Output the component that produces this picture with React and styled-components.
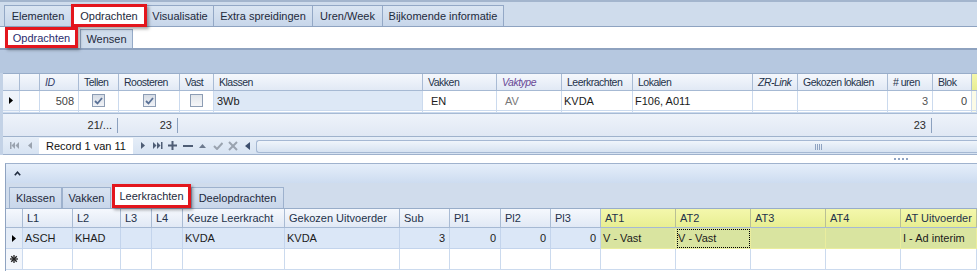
import React from 'react';
import styled, { createGlobalStyle, css } from 'styled-components';

const GlobalStyle = createGlobalStyle`
  html, body { margin: 0; padding: 0; background: #fff; }
  body {
    font-family: "Liberation Sans", Arial, sans-serif;
    font-size: 11px;
    color: #1b1b1b;
  }
`;

const MAIN_COLS = '17px 20px 39px 40px 61px 34px 209px 74px 65px 71px 120px 45px 90px 45px 39px 1fr';
const DETAIL_COLS = '17px 50px 48px 31px 31px 102px 115px 50px 51px 50px 50px 75px 75px 75px 75px 1fr';

const mainTabs = [
  { label: 'Elementen', w: 68 },
  { label: 'Opdrachten', w: 76, active: true },
  { label: 'Visualisatie', w: 68 },
  { label: 'Extra spreidingen', w: 100 },
  { label: 'Uren/Week', w: 71 },
  { label: 'Bijkomende informatie', w: 122 },
];

const mainColumns = [
  { label: '' },
  { label: '' },
  { label: 'ID', italic: true, color: '#34406a' },
  { label: 'Tellen' },
  { label: 'Roosteren' },
  { label: 'Vast' },
  { label: 'Klassen' },
  { label: 'Vakken' },
  { label: 'Vaktype', italic: true, color: '#6a4a96' },
  { label: 'Leerkrachten' },
  { label: 'Lokalen' },
  { label: 'ZR-Link', italic: true },
  { label: 'Gekozen lokalen' },
  { label: '# uren' },
  { label: 'Blok' },
  { label: '', yellow: true },
];

const detailColumns = [
  '', 'L1', 'L2', 'L3', 'L4', 'Keuze Leerkracht', 'Gekozen Uitvoerder', 'Sub',
  'Pl1', 'Pl2', 'Pl3', 'AT1', 'AT2', 'AT3', 'AT4', 'AT Uitvoerder',
];

const detailRow = [
  { text: 'ASCH' }, { text: 'KHAD' }, { text: '' }, { text: '' },
  { text: 'KVDA' }, { text: 'KVDA' },
  { text: '3', right: true }, { text: '0', right: true }, { text: '0', right: true }, { text: '0', right: true },
  { text: 'V - Vast', at: true }, { text: 'V - Vast', at: true, focus: true },
  { text: '', at: true }, { text: '', at: true }, { text: 'I - Ad interim', at: true },
];

const marked = css`
  border: 3px solid #e3161d;
  box-shadow: 2px 2px 3px rgba(0, 0, 0, 0.35);
  position: relative;
  z-index: 1;
`;

const Page = styled.div`
  width: 977px;
  height: 271px;
  overflow: hidden;
  background: #fff;
  display: flex;
  flex-direction: column;
`;

const TabStrip = styled.div`
  box-sizing: border-box;
  height: 27px;
  display: flex;
  align-items: flex-end;
  padding-left: 4px;
  background: #cfdcec;
  border-top: 2px solid #a3b5cd;
  border-bottom: 1px solid #8ea3c1;
  flex-shrink: 0;
`;

const Tab = styled.div`
  box-sizing: border-box;
  width: ${(p) => p.$w}px;
  height: ${(p) => (p.$active ? 23 : 21)}px;
  margin-bottom: ${(p) => (p.$active ? -1 : 0)}px;
  margin-left: -1px;
  display: flex;
  align-items: center;
  justify-content: center;
  color: #1e2a3c;
  white-space: nowrap;
  background: ${(p) => (p.$active ? '#fff' : 'linear-gradient(#dae5f2, #c7d6ea)')};
  border: 1px solid #93a8c6;
  border-bottom: none;
  &:first-child { margin-left: 0; }
  ${(p) => p.$marked && marked}
`;

const SubStrip = styled.div`
  box-sizing: border-box;
  height: 23px;
  display: flex;
  align-items: flex-end;
  padding-left: 5px;
  background: #fff;
  border-bottom: 2px solid #8ea2bf;
  flex-shrink: 0;
`;

const SubTab = styled.div`
  box-sizing: border-box;
  width: ${(p) => p.$w}px;
  height: ${(p) => (p.$active ? 21 : 19)}px;
  margin-left: ${(p) => (p.$active ? 0 : 2)}px;
  display: flex;
  align-items: center;
  justify-content: center;
  color: ${(p) => (p.$active ? '#2b2d6e' : '#1e2a3c')};
  background: ${(p) => (p.$active ? '#fff' : '#cfdcec')};
  border: 1px solid #95aac7;
  border-bottom: none;
  ${(p) => p.$marked && marked}
`;

const GroupPanel = styled.div`
  height: 23px;
  background: #b6c8e0;
  flex-shrink: 0;
`;

const MainGrid = styled.div`
  border-left: 3px solid #c3d2e6;
  flex-shrink: 0;
`;

const Row = styled.div`
  box-sizing: border-box;
  display: grid;
  grid-template-columns: ${(p) => p.$cols};
  height: ${(p) => p.$h}px;
`;

const HeaderRow = styled(Row)`
  border-top: 1px solid #98adc9;
  border-bottom: 1px solid #a6b9d3;
`;

const HeadCell = styled.div`
  box-sizing: border-box;
  display: flex;
  align-items: center;
  padding: 0 4px;
  overflow: hidden;
  white-space: nowrap;
  border-right: 1px solid ${(p) => (p.$yellow ? '#b9bf95' : '#a9bbd4')};
  background: ${(p) => (p.$yellow ? 'linear-gradient(#f4f7ac, #e8ee92)' : 'linear-gradient(#f5f8fd, #e1e9f5)')};
  color: ${(p) => p.$color || '#24324a'};
  font-style: ${(p) => (p.$italic ? 'italic' : 'normal')};
  ${(p) => p.$narrow && css`
    font-size: 10.5px;
    letter-spacing: -0.5px;
    padding-left: 5px;
  `}
`;

const Cell = styled.div`
  box-sizing: border-box;
  display: flex;
  align-items: center;
  justify-content: ${(p) => (p.$right ? 'flex-end' : p.$center ? 'center' : 'flex-start')};
  padding: 0 ${(p) => (p.$right ? 4 : 0)}px 0 ${(p) => (p.$indent ?? 3)}px;
  overflow: hidden;
  white-space: nowrap;
  color: ${(p) => p.$color || '#1b1b1b'};
  background: ${(p) => p.$bg || '#fff'};
  border-right: 1px solid ${(p) => p.$line || '#cbdaee'};
  border-bottom: 1px solid ${(p) => p.$line || '#cbdaee'};
  ${(p) => p.$focus && css`outline: 1px dotted #000; outline-offset: -2px;`}
`;

const Check = styled.div`
  box-sizing: border-box;
  width: 13px;
  height: 13px;
  border: 1px solid #8d9db4;
  background: ${(p) => (p.$on ? 'linear-gradient(#d6dce5, #f1f3f7)' : 'linear-gradient(#e1e5ea, #f5f6f8)')};
  display: flex;
  align-items: center;
  justify-content: center;
`;

const FooterRow = styled(Row)`
  background: linear-gradient(#eef3fa, #e0e8f4);
  border-top: 1px solid #a7bad4;
  border-bottom: 1px solid #9fb2cc;
`;

const Summary = styled.div`
  box-sizing: border-box;
  align-self: center;
  height: 15px;
  display: flex;
  align-items: center;
  justify-content: flex-end;
  padding-right: 5px;
  color: #2b2b2b;
  border-right: ${(p) => (p.$text ? '1px solid #8ca1bf' : 'none')};
  margin-right: ${(p) => (p.$gap ?? 1)}px;
`;

const NavRow = styled.div`
  box-sizing: border-box;
  height: 18px;
  display: flex;
  align-items: stretch;
  padding-left: 4px;
  background: linear-gradient(#e6eef8, #d7e3f2);
  border-bottom: 1px solid #9eb1cc;
`;

const NavButton = styled.div`
  width: 15px;
  flex-shrink: 0;
  display: flex;
  align-items: center;
  justify-content: center;
`;

const RecordBox = styled.div`
  width: 94px;
  margin: 1px 2px 0;
  background: #fff;
  display: flex;
  align-items: center;
  padding-left: 7px;
  box-sizing: border-box;
  color: #111;
`;

const ScrollThumb = styled.div`
  flex: 1;
  margin: 3px 0 1px 1px;
  border: 1px solid #a5b8d3;
  border-right: none;
  border-radius: 3px 0 0 3px;
  background: linear-gradient(#f0f5fb, #d6e2f1);
  display: flex;
  align-items: center;
  padding-left: 558px;
`;

const Grip = styled.div`
  display: flex;
  gap: 1px;
  span { width: 1px; height: 6px; background: #8fa3c1; }
`;

const Splitter = styled.div`
  height: 8px;
  display: flex;
  justify-content: flex-end;
  align-items: center;
  padding-right: 69px;
  gap: 1px;
  flex-shrink: 0;
  span { width: 2px; height: 2px; background: #8fa3c3; margin-left: 1px; }
`;

const Detail = styled.div`
  flex: 1;
  margin-left: 5px;
  border-left: 1px solid #8fa3c1;
  border-top: 1px solid #9fb2cd;
  display: flex;
  flex-direction: column;
`;

const CollapseBar = styled.div`
  height: 19px;
  display: flex;
  align-items: center;
  padding-left: 8px;
  background: linear-gradient(#e5eefa, #cddcf0);
  flex-shrink: 0;
`;

const DetailTabs = styled.div`
  box-sizing: border-box;
  height: 25px;
  display: flex;
  align-items: flex-end;
  padding-left: 3px;
  background: #d0dcec;
  flex-shrink: 0;
`;

const DetailTab = styled.div`
  box-sizing: border-box;
  width: ${(p) => p.$w}px;
  height: ${(p) => (p.$active ? 24 : 21)}px;
  margin-left: ${(p) => (p.$active ? 1 : 0)}px;
  display: flex;
  align-items: center;
  justify-content: center;
  color: #1e2a3c;
  background: ${(p) => (p.$active ? '#fff' : 'linear-gradient(#d8e3f1, #c8d6ea)')};
  border: 1px solid #9db1cd;
  border-bottom: none;
  ${(p) => p.$marked && marked}
`;

const Icon = ({ children, w = 10, h = 8 }) => (
  <svg width={w} height={h} viewBox={`0 0 ${w} ${h}`}>{children}</svg>
);

const GRAY = '#9aa3af';
const DARK = '#4e5d75';

const RowArrow = () => (
  <Icon w={4} h={7}><polygon points="0,0 4,3.5 0,7" fill="#000" /></Icon>
);

const NewRowMark = () => (
  <Icon w={8} h={8}>
    <g stroke="#222" strokeWidth="1.3">
      <line x1="4" y1="0" x2="4" y2="8" />
      <line x1="0" y1="4" x2="8" y2="4" />
      <line x1="1.2" y1="1.2" x2="6.8" y2="6.8" />
      <line x1="6.8" y1="1.2" x2="1.2" y2="6.8" />
    </g>
  </Icon>
);

const CheckMark = () => (
  <Icon w={9} h={8}>
    <polyline points="1,4 3.5,6.5 8,1" fill="none" stroke="#5a7196" strokeWidth="1.8" />
  </Icon>
);

const navIcons = [
  <Icon key="first" w={9} h={7}>
    <rect x="0" y="0" width="1.5" height="7" fill={GRAY} />
    <polygon points="5,0 1.5,3.5 5,7" fill={GRAY} />
    <polygon points="9,0 5.5,3.5 9,7" fill={GRAY} />
  </Icon>,
  <Icon key="prev" w={4} h={7}><polygon points="4,0 0,3.5 4,7" fill={GRAY} /></Icon>,
  'record',
  <Icon key="next" w={4} h={7}><polygon points="0,0 4,3.5 0,7" fill={DARK} /></Icon>,
  <Icon key="last" w={10} h={7}>
    <polygon points="0,0 3.5,3.5 0,7" fill={DARK} />
    <polygon points="4,0 7.5,3.5 4,7" fill={DARK} />
    <rect x="8" y="0" width="1.5" height="7" fill={DARK} />
  </Icon>,
  <Icon key="add" w={9} h={9}>
    <rect x="3.5" y="0" width="2" height="9" fill={DARK} />
    <rect x="0" y="3.5" width="9" height="2" fill={DARK} />
  </Icon>,
  <Icon key="del" w={10} h={2}><rect x="0" y="0" width="10" height="2" fill={DARK} /></Icon>,
  <Icon key="up" w={7} h={4}><polygon points="0,4 3.5,0 7,4" fill="#6d7a8e" /></Icon>,
  <Icon key="ok" w={10} h={8}>
    <polyline points="1,4 4,7 9.5,1" fill="none" stroke={GRAY} strokeWidth="2" />
  </Icon>,
  <Icon key="cancel" w={10} h={10}>
    <g stroke={GRAY} strokeWidth="2">
      <line x1="1" y1="1" x2="9" y2="9" />
      <line x1="9" y1="1" x2="1" y2="9" />
    </g>
  </Icon>,
  <Icon key="left" w={5} h={8}><polygon points="5,0 0,4 5,8" fill="#3d4f6e" /></Icon>,
];

const MainDataRow = () => (
  <Row $cols={MAIN_COLS} $h={20}>
    <Cell $center $indent={0} $bg="#eef3fa"><RowArrow /></Cell>
    <Cell />
    <Cell $right $color="#444">508</Cell>
    <Cell $center $indent={0}><Check $on><CheckMark /></Check></Cell>
    <Cell $center $indent={0}><Check $on><CheckMark /></Check></Cell>
    <Cell $center $indent={0}><Check /></Cell>
    <Cell $bg="#dde8f6">3Wb</Cell>
    <Cell $indent={8}>EN</Cell>
    <Cell $indent={8} $color="#777">AV</Cell>
    <Cell $indent={2}>KVDA</Cell>
    <Cell $indent={2}>F106, A011</Cell>
    <Cell />
    <Cell />
    <Cell $right $color="#555">3</Cell>
    <Cell $right $color="#444">0</Cell>
    <Cell $bg="#fbfbe6" />
  </Row>
);

const PartialRow = () => (
  <Row $cols={MAIN_COLS} $h={2}>
    {mainColumns.map((c, i) => (
      <Cell key={i} $bg={i === 0 ? '#eef3fa' : c.yellow ? '#fbfbe6' : '#fff'} />
    ))}
  </Row>
);

const footerCells = { 3: '21/...', 4: '23', 13: '23' };

export default function App() {
  return (
    <Page>
      <GlobalStyle />
      <TabStrip>
        {mainTabs.map((t) => (
          <Tab key={t.label} $w={t.w} $active={t.active} $marked={t.active}>{t.label}</Tab>
        ))}
      </TabStrip>
      <SubStrip>
        <SubTab $w={73} $active $marked>Opdrachten</SubTab>
        <SubTab $w={53}>Wensen</SubTab>
      </SubStrip>
      <GroupPanel />
      <MainGrid>
        <HeaderRow $cols={MAIN_COLS} $h={18}>
          {mainColumns.map((c, i) => (
            <HeadCell key={i} $narrow $italic={c.italic} $color={c.color} $yellow={c.yellow}>
              {c.label}
            </HeadCell>
          ))}
        </HeaderRow>
        <MainDataRow />
        <PartialRow />
        <FooterRow $cols={MAIN_COLS} $h={24}>
          {mainColumns.map((c, i) => (
            <Summary key={i} $text={!!footerCells[i]} $gap={i === 4 ? 2 : 1}>
              {footerCells[i] || ''}
            </Summary>
          ))}
        </FooterRow>
        <NavRow>
          {navIcons.map((icon, i) =>
            icon === 'record' ? (
              <RecordBox key="rec">Record 1 van 11</RecordBox>
            ) : (
              <NavButton key={i}>{icon}</NavButton>
            )
          )}
          <ScrollThumb>
            <Grip><span /><span /><span /><span /></Grip>
          </ScrollThumb>
        </NavRow>
      </MainGrid>
      <Splitter><span /><span /><span /><span /></Splitter>
      <Detail>
        <CollapseBar>
          <Icon w={7} h={5}>
            <polyline points="0.8,4.2 3.5,1.2 6.2,4.2" fill="none" stroke="#1f2b3f" strokeWidth="1.6" />
          </Icon>
        </CollapseBar>
        <DetailTabs>
          <DetailTab $w={53}>Klassen</DetailTab>
          <DetailTab $w={49}>Vakken</DetailTab>
          <DetailTab $w={79} $active $marked>Leerkrachten</DetailTab>
          <DetailTab $w={93}>Deelopdrachten</DetailTab>
        </DetailTabs>
        <HeaderRow $cols={DETAIL_COLS} $h={20}>
          {detailColumns.map((label, i) => (
            <HeadCell key={i} $yellow={i >= 11}>{label}</HeadCell>
          ))}
        </HeaderRow>
        <Row $cols={DETAIL_COLS} $h={21}>
          <Cell $center $indent={0} $bg="#e4ecf7" $line="#c3d4ec"><RowArrow /></Cell>
          {detailRow.map((c, i) => (
            <Cell
              key={i}
              $right={c.right}
              $indent={2}
              $focus={c.focus}
              $bg={c.at ? '#d9e4a0' : '#dbe7f7'}
              $line={c.at ? '#eaed9e' : '#c3d4ec'}
            >
              {c.text}
            </Cell>
          ))}
        </Row>
        <Row $cols={DETAIL_COLS} $h={21}>
          <Cell $center $indent={0} $bg="#f3f6fb"><NewRowMark /></Cell>
          {detailRow.map((c, i) => <Cell key={i} />)}
        </Row>
      </Detail>
    </Page>
  );
}
